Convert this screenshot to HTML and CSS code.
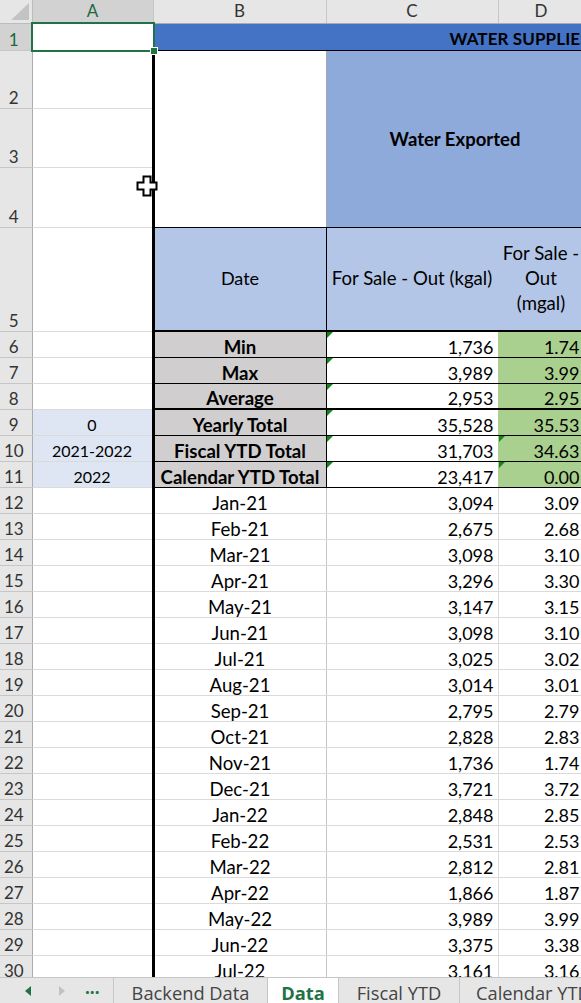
FILE: index.html
```html
<!DOCTYPE html>
<html lang="en">
<head>
<meta charset="utf-8">
<title>Water Supplies - Data</title>
<link rel="stylesheet" href="styles.css">
</head>
<body>
<div class="app">
  <div class="sheet">
    <table class="grid">
      <colgroup>
        <col class="w-rh"><col class="w-a"><col class="w-b"><col class="w-c"><col class="w-d">
      </colgroup>
      <tr class="h-hdr">
        <th class="corner"><svg class="corner-tri" width="18" height="17" viewBox="0 0 18 17"><polygon points="0,17 18,17 18,0" fill="#c3c3c3"/></svg></th>
        <th class="colh sel">A</th>
        <th class="colh">B</th>
        <th class="colh">C</th>
        <th class="colh">D</th>
      </tr>
      <tr class="h-r1">
        <th class="rowh sel">1</th>
        <td class="a1"><div class="selbox"><span class="handle"></span></div></td>
        <td class="title" colspan="3">WATER SUPPLIES</td>
      </tr>
      <tr class="h-r2">
        <th class="rowh">2</th>
        <td></td>
        <td class="b-merge bl" rowspan="3"></td>
        <td class="exported" colspan="2" rowspan="3">Water Exported</td>
      </tr>
      <tr class="h-r3">
        <th class="rowh">3</th>
        <td></td>
      </tr>
      <tr class="h-r4">
        <th class="rowh">4</th>
        <td></td>
      </tr>
      <tr class="h-r5">
        <th class="rowh">5</th>
        <td></td>
        <td class="hd hd-b bl">Date</td>
        <td class="hd hd-c">For Sale - Out (kgal)</td>
        <td class="hd hd-d">For Sale -<br>Out<br>(mgal)</td>
      </tr>
      <tr class="h-row">
        <th class="rowh">6</th><td></td>
        <td class="st bl">Min</td><td class="sv tri">1,736</td><td class="sg">1.74</td>
      </tr>
      <tr class="h-row">
        <th class="rowh">7</th><td></td>
        <td class="st bl">Max</td><td class="sv tri">3,989</td><td class="sg">3.99</td>
      </tr>
      <tr class="h-row thick-b">
        <th class="rowh">8</th><td></td>
        <td class="st bl">Average</td><td class="sv tri">2,953</td><td class="sg">2.95</td>
      </tr>
      <tr class="h-row">
        <th class="rowh">9</th><td class="ab">0</td>
        <td class="st bl">Yearly Total</td><td class="sv tri">35,528</td><td class="sg">35.53</td>
      </tr>
      <tr class="h-row">
        <th class="rowh">10</th><td class="ab">2021-2022</td>
        <td class="st bl">Fiscal YTD Total</td><td class="sv tri">31,703</td><td class="sg tri">34.63</td>
      </tr>
      <tr class="h-row">
        <th class="rowh">11</th><td class="ab">2022</td>
        <td class="st bl">Calendar YTD Total</td><td class="sv tri">23,417</td><td class="sg tri">0.00</td>
      </tr>
      <tr class="h-row"><th class="rowh">12</th><td></td><td class="dt bl">Jan-21</td><td class="num">3,094</td><td class="num">3.09</td></tr>
      <tr class="h-row"><th class="rowh">13</th><td></td><td class="dt bl">Feb-21</td><td class="num">2,675</td><td class="num">2.68</td></tr>
      <tr class="h-row"><th class="rowh">14</th><td></td><td class="dt bl">Mar-21</td><td class="num">3,098</td><td class="num">3.10</td></tr>
      <tr class="h-row"><th class="rowh">15</th><td></td><td class="dt bl">Apr-21</td><td class="num">3,296</td><td class="num">3.30</td></tr>
      <tr class="h-row"><th class="rowh">16</th><td></td><td class="dt bl">May-21</td><td class="num">3,147</td><td class="num">3.15</td></tr>
      <tr class="h-row"><th class="rowh">17</th><td></td><td class="dt bl">Jun-21</td><td class="num">3,098</td><td class="num">3.10</td></tr>
      <tr class="h-row"><th class="rowh">18</th><td></td><td class="dt bl">Jul-21</td><td class="num">3,025</td><td class="num">3.02</td></tr>
      <tr class="h-row"><th class="rowh">19</th><td></td><td class="dt bl">Aug-21</td><td class="num">3,014</td><td class="num">3.01</td></tr>
      <tr class="h-row"><th class="rowh">20</th><td></td><td class="dt bl">Sep-21</td><td class="num">2,795</td><td class="num">2.79</td></tr>
      <tr class="h-row"><th class="rowh">21</th><td></td><td class="dt bl">Oct-21</td><td class="num">2,828</td><td class="num">2.83</td></tr>
      <tr class="h-row"><th class="rowh">22</th><td></td><td class="dt bl">Nov-21</td><td class="num">1,736</td><td class="num">1.74</td></tr>
      <tr class="h-row"><th class="rowh">23</th><td></td><td class="dt bl">Dec-21</td><td class="num">3,721</td><td class="num">3.72</td></tr>
      <tr class="h-row"><th class="rowh">24</th><td></td><td class="dt bl">Jan-22</td><td class="num">2,848</td><td class="num">2.85</td></tr>
      <tr class="h-row"><th class="rowh">25</th><td></td><td class="dt bl">Feb-22</td><td class="num">2,531</td><td class="num">2.53</td></tr>
      <tr class="h-row"><th class="rowh">26</th><td></td><td class="dt bl">Mar-22</td><td class="num">2,812</td><td class="num">2.81</td></tr>
      <tr class="h-row"><th class="rowh">27</th><td></td><td class="dt bl">Apr-22</td><td class="num">1,866</td><td class="num">1.87</td></tr>
      <tr class="h-row"><th class="rowh">28</th><td></td><td class="dt bl">May-22</td><td class="num">3,989</td><td class="num">3.99</td></tr>
      <tr class="h-row"><th class="rowh">29</th><td></td><td class="dt bl">Jun-22</td><td class="num">3,375</td><td class="num">3.38</td></tr>
      <tr class="h-row"><th class="rowh">30</th><td></td><td class="dt bl">Jul-22</td><td class="num">3,161</td><td class="num">3.16</td></tr>
    </table>
    <svg class="cursor" width="22" height="22" viewBox="0 0 22 22">
      <polygon points="7.5,1.5 14.5,1.5 14.5,7.5 20.5,7.5 20.5,14.5 14.5,14.5 14.5,20.5 7.5,20.5 7.5,14.5 1.5,14.5 1.5,7.5 7.5,7.5" fill="#fff" stroke="#000" stroke-width="2"/>
    </svg>
  </div>
  <div class="tabs">
    <div class="nav">
      <svg class="arrow" width="8" height="12" viewBox="0 0 8 12"><polygon points="7,1 7,11 1,6" fill="#217346"/></svg>
      <svg class="arrow arrow-r" width="8" height="12" viewBox="0 0 8 12"><polygon points="1,1 1,11 7,6" fill="#c2c2c2"/></svg>
      <span class="more">...</span>
    </div>
    <div class="tab tab-backend">Backend Data</div>
    <div class="tab tab-active">Data</div>
    <div class="tab tab-fiscal">Fiscal YTD</div>
    <div class="tab tab-cal">Calendar YTD</div>
  </div>
</div>
</body>
</html>
```

FILE: styles.css
```css
* { box-sizing: border-box; }

html, body {
  margin: 0;
  padding: 0;
  overflow: hidden;
  background: #fff;
}

body {
  font-family: Lato, "Liberation Sans", sans-serif;
  color: #000;
}

.app {
  width: 581px;
  height: 1003px;
  display: flex;
  flex-direction: column;
  overflow: hidden;
}

.sheet {
  flex: 1;
  position: relative;
  overflow: hidden;
  background: #fff;
}

/* ---------- grid ---------- */
.grid {
  border-collapse: collapse;
  table-layout: fixed;
  width: 584px;
}

.w-rh { width: 32px; }
.w-a { width: 121px; }
.w-b { width: 173px; }
.w-c { width: 172px; }
.w-d { width: 86px; }

.h-hdr { height: 23px; }
.h-r1 { height: 27px; }
.h-r2 { height: 58px; }
.h-r3 { height: 59px; }
.h-r4 { height: 60px; }
.h-r5 { height: 104px; }
.h-row { height: 26px; }

.grid td {
  border: 1px solid #dadada;
  padding: 0 4px;
  font-size: 18px;
  line-height: 20px;
  vertical-align: bottom;
  white-space: nowrap;
}

.grid th {
  font-weight: normal;
  font-size: 17px;
  color: #333;
  padding: 0;
  background: #e6e6e6;
}

.corner {
  border: 1px solid #bcbcbc;
  border-top: none;
  border-left: none;
  position: relative;
}

.corner-tri {
  position: absolute;
  right: 3px;
  bottom: 3px;
}

.colh {
  border: 1px solid #c6c6c6;
  border-top: none;
  border-bottom-color: #ababab;
  text-align: center;
  vertical-align: middle;
  line-height: 20px;
}

.rowh {
  border: 1px solid #c6c6c6;
  border-left: none;
  border-right-color: #ababab;
  text-align: center;
  vertical-align: bottom;
  line-height: 20px;
  padding-right: 4px !important;
}

.grid th.sel {
  background: #d2d2d2;
  color: #1b6a3d;
}

/* row 1 */
.a1 { position: relative; }

.selbox {
  position: absolute;
  top: -2px;
  left: -2px;
  right: -2px;
  bottom: -2px;
  border: 2px solid #217346;
}

.handle {
  position: absolute;
  right: -5px;
  bottom: -5px;
  width: 8px;
  height: 8px;
  background: #217346;
  border: 1px solid #fff;
}

.grid td.title {
  background: #4472c4;
  border-color: #4472c4;
  border-bottom: 1px solid #000;
  font-weight: bold;
  font-size: 17px;
  letter-spacing: 0.1px;
  padding-left: 296px;
  text-align: left;
  vertical-align: bottom;
  line-height: 22px;
}

/* rows 2-4 */
.grid td.b-merge {
  background: #fff;
  border-top: 1px solid #000;
  border-bottom: 1px solid #000;
  border-right: 1px solid #a6a6a6;
}

.grid td.bl { border-left: 3px solid #000; }

.grid td.exported {
  background: #8eaadb;
  border-top: 1px solid #000;
  border-bottom: 1px solid #000;
  border-left: 1px solid #a6a6a6;
  border-right-color: #8eaadb;
  font-weight: bold;
  font-size: 18.5px;
  text-align: center;
  vertical-align: middle;
}

/* row 5 */
.grid td.hd {
  background: #b4c6e7;
  text-align: center;
  vertical-align: middle;
  border-top: 1px solid #000;
  border-bottom: 2px solid #000;
  line-height: 25px;
}

.grid td.hd-b {
  border-right: 1px solid #000;
  border-left: 3px solid #000;
}

.grid td.hd-c {
  padding: 0 1px;
  font-size: 18.6px;
  border-right: 1px solid #b4c6e7;
}

.grid td.hd-d {
  padding: 0 1px;
  font-size: 18.6px;
  border-right-color: #b4c6e7;
  white-space: normal;
}

/* rows 6-11 */
.grid td.st {
  background: #d0cece;
  font-weight: bold;
  font-size: 18.6px;
  text-align: center;
  border-top: 1px solid #000;
  border-bottom: 1px solid #000;
  border-right: 1px solid #000;
}

.grid td.sv {
  text-align: right;
  border-top: 1px solid #000;
  border-bottom: 1px solid #000;
  border-right: 1px solid #a9d08e;
}

.grid td.sg {
  background: #a9d08e;
  text-align: right;
  border-top: 1px solid #000;
  border-bottom: 1px solid #000;
  border-right-color: #a9d08e;
}

.thick-b td.st,
.thick-b td.sv,
.thick-b td.sg {
  border-bottom: 2px solid #000;
}

.grid td.ab {
  background: #dfe6f3;
  border-top: 1px solid #2c52e0;
  text-align: center;
  font-size: 16px;
}

.grid td.tri { position: relative; }

.grid td.tri::before {
  content: "";
  position: absolute;
  top: 0;
  left: 0;
  border-top: 6px solid #12861a;
  border-right: 6px solid transparent;
}

/* rows 12+ */
.grid td.dt {
  text-align: center;
  font-size: 18.6px;
  border-right: 1px solid #c4c4c4;
}

.grid td.num { text-align: right; }

/* cursor overlay */
.cursor {
  position: absolute;
  left: 136px;
  top: 175px;
}

/* ---------- sheet tabs ---------- */
.tabs {
  flex: none;
  height: 26px;
  display: flex;
  background: #e6e6e6;
  border-top: 1px solid #c6c6c6;
  font-family: "Open Sans", "Noto Sans", sans-serif;
  font-size: 18.3px;
  color: #444;
  overflow: hidden;
}

.nav {
  width: 114px;
  flex: none;
  display: flex;
  align-items: center;
  border-right: 1px solid #c6c6c6;
  padding-left: 24px;
}

.arrow { flex: none; }
.arrow-r { margin-left: 26px; }

.more {
  margin-left: 19px;
  color: #217346;
  font-weight: bold;
  font-size: 17px;
  line-height: 26px;
  padding-bottom: 6px;
}

.tab {
  flex: none;
  height: 26px;
  line-height: 26px;
  padding-top: 2px;
  text-align: center;
  white-space: nowrap;
}

.tab-backend {
  width: 154px;
  border-right: 1px solid #c6c6c6;
}

.tab-active {
  width: 70px;
  margin-top: -1px;
  height: 27px;
  padding-top: 3px;
  background: #fff;
  color: #217346;
  font-weight: bold;
}

.tab-fiscal {
  width: 122px;
  border-left: 1px solid #c6c6c6;
  border-right: 1px solid #c6c6c6;
}

.tab-cal {
  width: 140px;
  text-align: left;
  padding-left: 16px;
}
```
